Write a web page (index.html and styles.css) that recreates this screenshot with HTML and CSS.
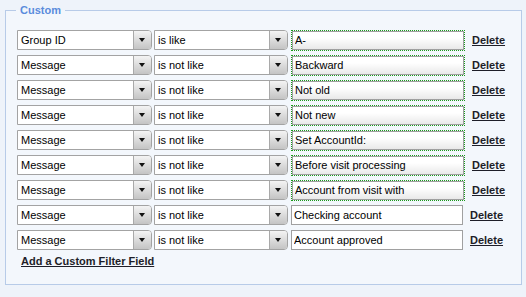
FILE: index.html
```html
<!DOCTYPE html>
<html>
  <head>
    <meta charset="utf-8" />
    <title>Custom filters</title>
    <link rel="stylesheet" href="styles.css">
  </head>
  <body>
    <fieldset class="filter-set">
      <legend class="filter-title">Custom</legend>

      <div class="filter-row">
        <span class="dropdown field-select"><span class="dropdown-value">Group ID</span><span class="dropdown-arrow"></span></span>
        <span class="dropdown op-select"><span class="dropdown-value">is like</span><span class="dropdown-arrow"></span></span>
        <span class="changed"><input type="text" class="filter-value" value="A-"></span>
        <a href="#" class="delete-link">Delete</a>
      </div>

      <div class="filter-row">
        <span class="dropdown field-select"><span class="dropdown-value">Message</span><span class="dropdown-arrow"></span></span>
        <span class="dropdown op-select"><span class="dropdown-value">is not like</span><span class="dropdown-arrow"></span></span>
        <span class="changed"><input type="text" class="filter-value" value="Backward"></span>
        <a href="#" class="delete-link">Delete</a>
      </div>

      <div class="filter-row">
        <span class="dropdown field-select"><span class="dropdown-value">Message</span><span class="dropdown-arrow"></span></span>
        <span class="dropdown op-select"><span class="dropdown-value">is not like</span><span class="dropdown-arrow"></span></span>
        <span class="changed"><input type="text" class="filter-value" value="Not old"></span>
        <a href="#" class="delete-link">Delete</a>
      </div>

      <div class="filter-row">
        <span class="dropdown field-select"><span class="dropdown-value">Message</span><span class="dropdown-arrow"></span></span>
        <span class="dropdown op-select"><span class="dropdown-value">is not like</span><span class="dropdown-arrow"></span></span>
        <span class="changed"><input type="text" class="filter-value" value="Not new"></span>
        <a href="#" class="delete-link">Delete</a>
      </div>

      <div class="filter-row">
        <span class="dropdown field-select"><span class="dropdown-value">Message</span><span class="dropdown-arrow"></span></span>
        <span class="dropdown op-select"><span class="dropdown-value">is not like</span><span class="dropdown-arrow"></span></span>
        <span class="changed"><input type="text" class="filter-value" value="Set AccountId:"></span>
        <a href="#" class="delete-link">Delete</a>
      </div>

      <div class="filter-row">
        <span class="dropdown field-select"><span class="dropdown-value">Message</span><span class="dropdown-arrow"></span></span>
        <span class="dropdown op-select"><span class="dropdown-value">is not like</span><span class="dropdown-arrow"></span></span>
        <span class="changed"><input type="text" class="filter-value" value="Before visit processing"></span>
        <a href="#" class="delete-link">Delete</a>
      </div>

      <div class="filter-row">
        <span class="dropdown field-select"><span class="dropdown-value">Message</span><span class="dropdown-arrow"></span></span>
        <span class="dropdown op-select"><span class="dropdown-value">is not like</span><span class="dropdown-arrow"></span></span>
        <span class="changed"><input type="text" class="filter-value" value="Account from visit with"></span>
        <a href="#" class="delete-link">Delete</a>
      </div>

      <div class="filter-row">
        <span class="dropdown field-select"><span class="dropdown-value">Message</span><span class="dropdown-arrow"></span></span>
        <span class="dropdown op-select"><span class="dropdown-value">is not like</span><span class="dropdown-arrow"></span></span>
        <input type="text" class="filter-value plain" value="Checking account">
        <a href="#" class="delete-link">Delete</a>
      </div>

      <div class="filter-row">
        <span class="dropdown field-select"><span class="dropdown-value">Message</span><span class="dropdown-arrow"></span></span>
        <span class="dropdown op-select"><span class="dropdown-value">is not like</span><span class="dropdown-arrow"></span></span>
        <input type="text" class="filter-value plain" value="Account approved">
        <a href="#" class="delete-link">Delete</a>
      </div>

      <a href="#" class="add-link">Add a Custom Filter Field</a>
    </fieldset>
  </body>
</html>
```

FILE: styles.css
```css
body {
  margin: 0;
  padding: 4px 4px 0 5px;
  background-color: #eef3fa;
  font-family: "Liberation Sans", Arial, sans-serif;
  font-size: 11px;
  color: #000;
}

.filter-set {
  margin: 0;
  padding: 13px 11px 16px 11px;
  border: 1px solid #b7cbe8;
  background-color: #f3f7fc;
}

.filter-title {
  padding: 0 4px;
  margin-left: -1px;
  color: #5a8cdc;
  font-weight: bold;
  line-height: 13px;
}

.filter-row {
  display: flex;
  align-items: center;
  height: 20px;
  margin-bottom: 5px;
}

.dropdown {
  display: flex;
  box-sizing: border-box;
  height: 20px;
  border: 1px solid #a3a3a3;
  border-radius: 0 4px 4px 0;
  background-color: #fff;
}

.field-select {
  width: 135px;
  margin-right: 2px;
}

.op-select {
  width: 134px;
  margin-right: 2px;
}

.dropdown-value {
  flex: 1;
  padding-left: 3px;
  line-height: 18px;
  white-space: nowrap;
  overflow: hidden;
}

.dropdown-arrow {
  position: relative;
  width: 17px;
  border-left: 1px solid #a9a9a9;
  border-radius: 0 3px 3px 0;
  background: linear-gradient(#f4f4f4, #d9d9d9 55%, #c4c4c4);
}

.dropdown-arrow::after {
  content: "";
  position: absolute;
  left: 5px;
  top: 7px;
  border-left: 3.5px solid transparent;
  border-right: 3.5px solid transparent;
  border-top: 4px solid #111;
}

.changed {
  display: flex;
  border: 1px dotted #1a9a1a;
  margin-left: 1px;
}

.filter-value {
  box-sizing: border-box;
  width: 172px;
  height: 19px;
  margin: 0;
  padding: 0 2px;
  border: 1px solid #a0a0a0;
  background: linear-gradient(#fff, #fff 35%, #e9e9e9);
  font-family: "Liberation Sans", Arial, sans-serif;
  font-size: 11px;
  color: #000;
  outline: none;
}

.filter-value.plain {
  height: 20px;
  margin-left: 1px;
  background: #fff;
}

.delete-link {
  margin-left: 7px;
  color: #1e1e28;
  font-weight: bold;
  text-decoration: underline;
}

.add-link {
  display: inline-block;
  margin-left: 4px;
  line-height: 13px;
  color: #1e1e28;
  font-weight: bold;
  text-decoration: underline;
}
```
